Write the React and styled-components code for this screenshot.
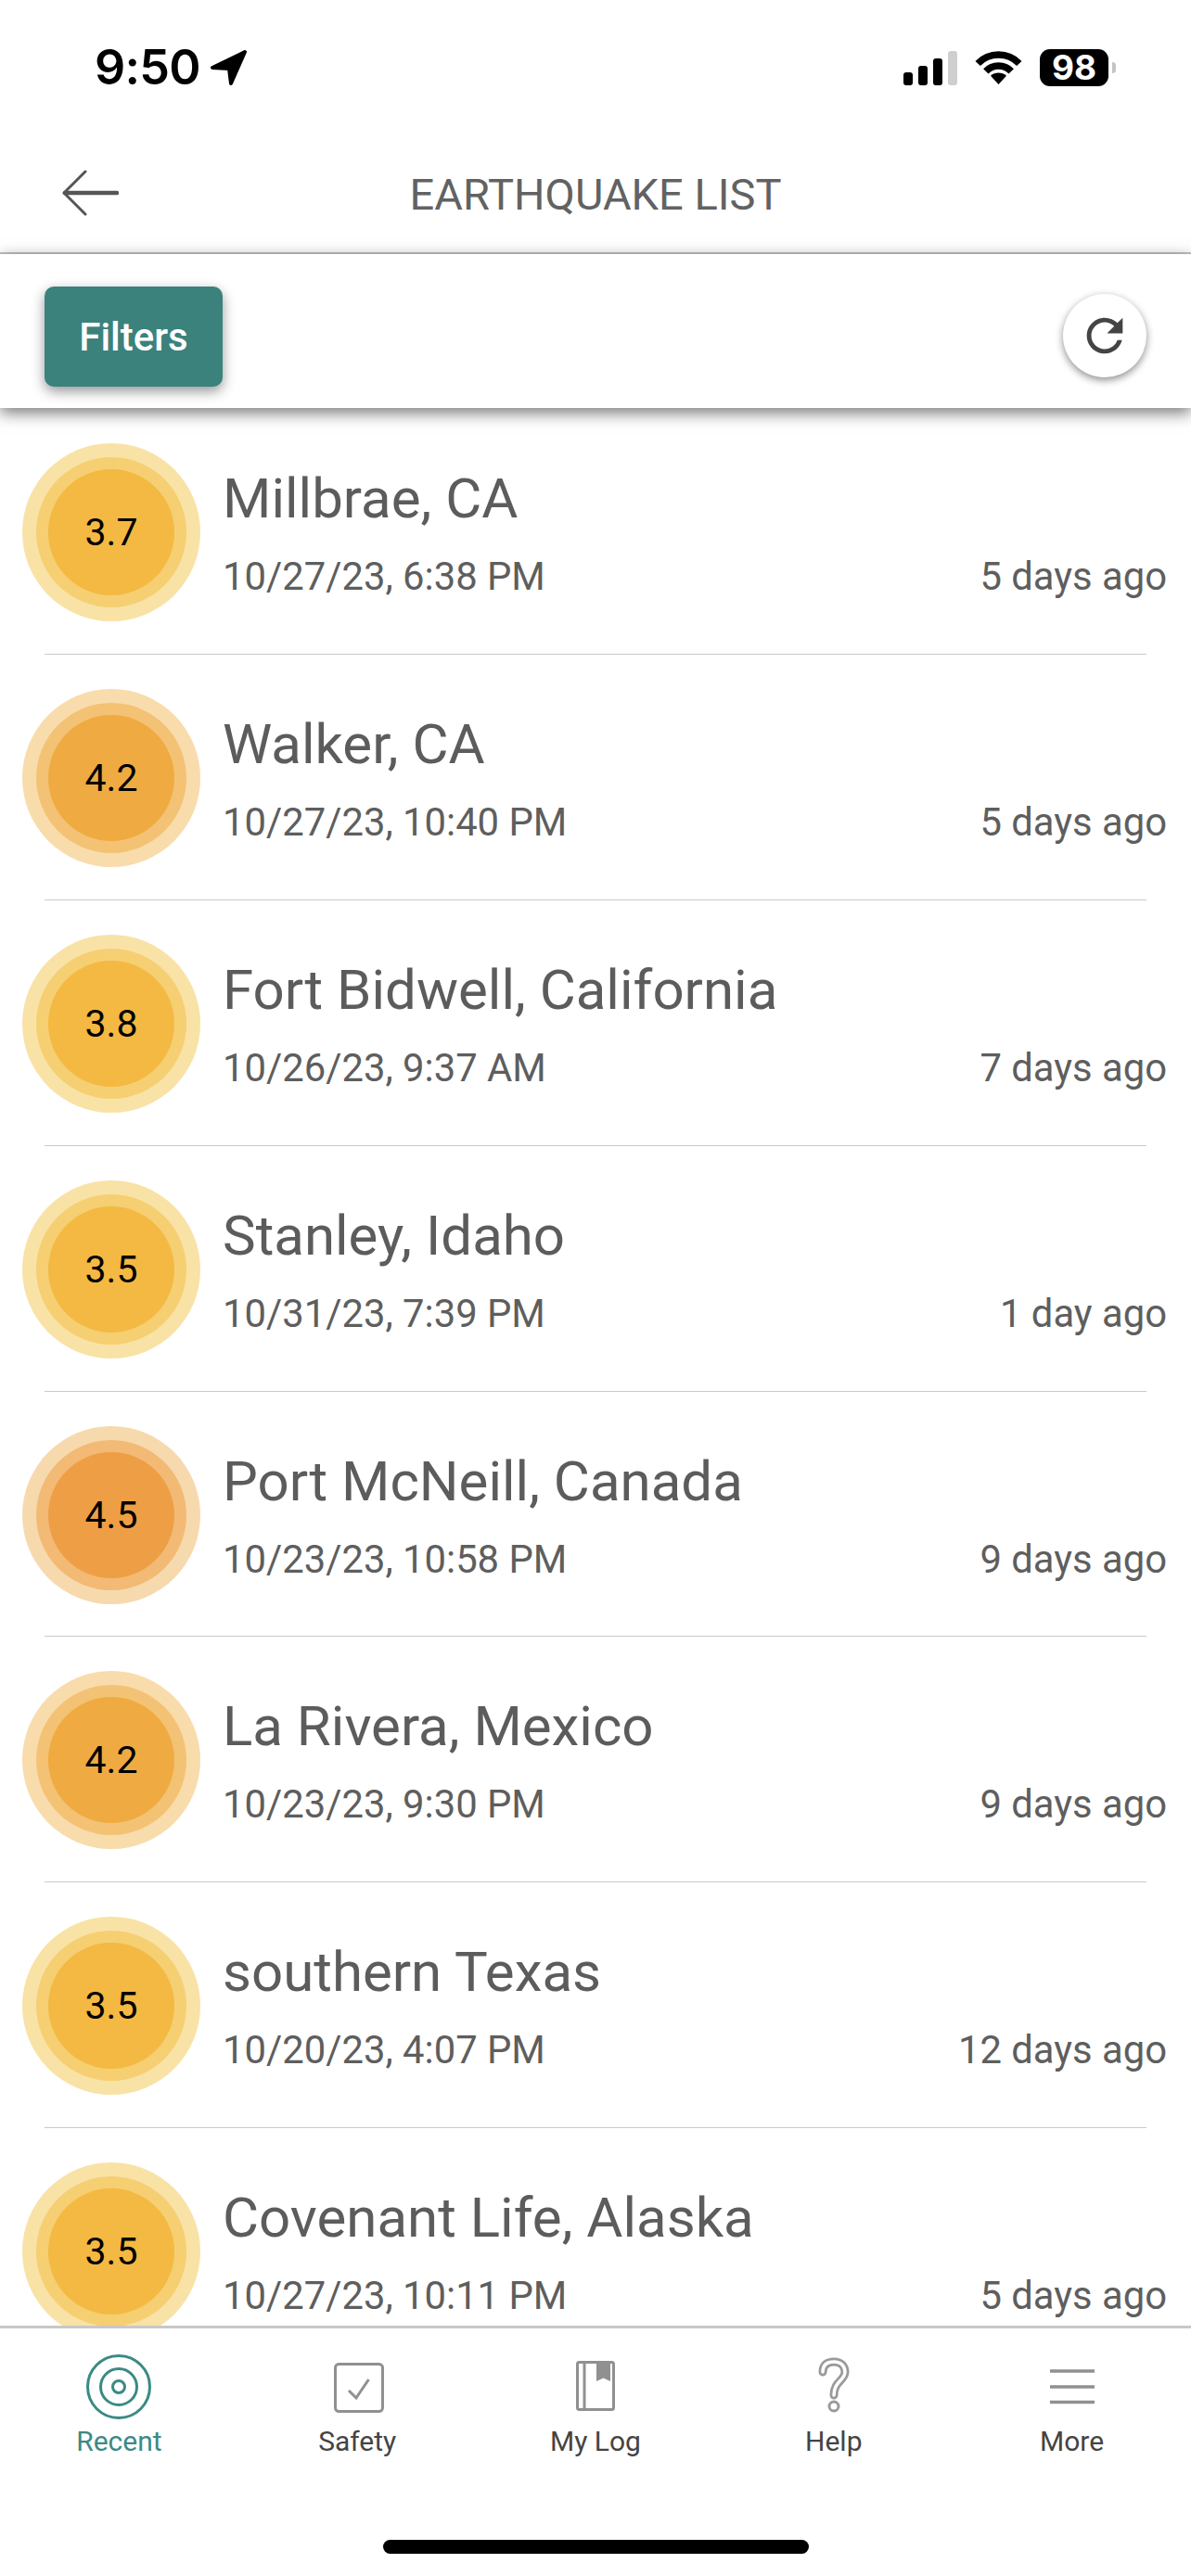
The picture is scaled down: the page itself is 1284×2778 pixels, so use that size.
import React from 'react';
import styled, { createGlobalStyle } from 'styled-components';

const quakes = [
  { mag: '3.7', level: 'low', place: 'Millbrae, CA', date: '10/27/23, 6:38 PM', ago: '5 days ago' },
  { mag: '4.2', level: 'mid', place: 'Walker, CA', date: '10/27/23, 10:40 PM', ago: '5 days ago' },
  { mag: '3.8', level: 'low', place: 'Fort Bidwell, California', date: '10/26/23, 9:37 AM', ago: '7 days ago' },
  { mag: '3.5', level: 'low', place: 'Stanley, Idaho', date: '10/31/23, 7:39 PM', ago: '1 day ago' },
  { mag: '4.5', level: 'high', place: 'Port McNeill, Canada', date: '10/23/23, 10:58 PM', ago: '9 days ago' },
  { mag: '4.2', level: 'mid', place: 'La Rivera, Mexico', date: '10/23/23, 9:30 PM', ago: '9 days ago' },
  { mag: '3.5', level: 'low', place: 'southern Texas', date: '10/20/23, 4:07 PM', ago: '12 days ago' },
  { mag: '3.5', level: 'low', place: 'Covenant Life, Alaska', date: '10/27/23, 10:11 PM', ago: '5 days ago' },
];

const palette = {
  low: { inner: '#f4b942', mid: '#f5cf72', outer: '#f9e2a6', edge: '#f8d98e' },
  mid: { inner: '#efab41', mid: '#f3c274', outer: '#f8dcac', edge: '#f6d298' },
  high: { inner: '#ee9f45', mid: '#f2ba74', outer: '#f7d9ae', edge: '#f5cf9a' },
};

const GlobalStyle = createGlobalStyle`
  html, body {
    margin: 0;
    padding: 0;
    background: #fff;
  }
  * {
    box-sizing: border-box;
  }
`;

const Page = styled.div`
  width: 1284px;
  height: 2778px;
  display: flex;
  flex-direction: column;
  background: #fff;
  font-family: Roboto, 'Liberation Sans', sans-serif;
  overflow: hidden;
`;

const StatusBar = styled.div`
  height: 98px;
  padding: 46px 89px 0 102px;
  display: flex;
  align-items: flex-start;
  color: #000;
`;

const Clock = styled.div`
  display: flex;
  align-items: center;
  gap: 10px;
  font-family: Inter, 'Liberation Sans', sans-serif;
  font-size: 52px;
  font-weight: 600;
  line-height: 54px;
  letter-spacing: -0.8px;
`;

const StatusIcons = styled.div`
  margin-left: auto;
  display: flex;
  align-items: center;
  height: 54px;
`;

const Signal = styled.div`
  display: flex;
  align-items: flex-end;
  gap: 6px;
  height: 38px;
  margin-right: 19px;
`;

const SignalBar = styled.span`
  width: 10px;
  height: ${props => props.$h}px;
  border-radius: 3px;
  background: ${props => (props.$off ? '#cfcfcf' : '#000')};
`;

const Battery = styled.div`
  width: 74px;
  height: 40px;
  margin-left: 19px;
  border-radius: 11px;
  background: #000;
  color: #fff;
  font-family: Inter, 'Liberation Sans', sans-serif;
  font-size: 37px;
  font-weight: 700;
  line-height: 40px;
  text-align: center;
  position: relative;
  &::after {
    content: '';
    position: absolute;
    left: 78px;
    top: 14px;
    width: 4px;
    height: 12px;
    border-radius: 0 6px 6px 0;
    background: #c4c4c4;
  }
`;

const Header = styled.header`
  height: 176px;
  padding-left: 66px;
  border-bottom: 2px solid #c4c4c4;
  display: flex;
  align-items: center;
  position: relative;
`;

const Title = styled.h1`
  position: absolute;
  left: 0;
  right: 0;
  top: 87px;
  margin: 0;
  text-align: center;
  font-size: 47px;
  font-weight: 400;
  line-height: 50px;
  color: #626262;
`;

const BackIcon = styled.svg`
  width: 62px;
  height: 50px;
  margin-top: 46px;
`;

const FilterBar = styled.div`
  height: 166px;
  padding: 35px 48px 0;
  display: flex;
  justify-content: space-between;
  align-items: flex-start;
  background: #fff;
  box-shadow: 0 5px 16px rgba(0, 0, 0, 0.55);
  position: relative;
  z-index: 2;
`;

const FilterButton = styled.button`
  width: 192px;
  height: 108px;
  border: 0;
  border-radius: 10px;
  background: #3b827d;
  color: #fff;
  font-family: inherit;
  font-size: 42px;
  font-weight: 500;
  box-shadow: 0 5px 14px rgba(0, 0, 0, 0.42);
`;

const RefreshButton = styled.button`
  width: 90px;
  height: 90px;
  margin-top: 8px;
  padding: 0;
  border: 0;
  border-radius: 50%;
  background: #fff;
  display: flex;
  align-items: center;
  justify-content: center;
  box-shadow: 0 3px 9px rgba(0, 0, 0, 0.45);
`;

const List = styled.main`
  flex: 1;
  min-height: 0;
  padding-top: 1px;
  overflow: hidden;
`;

const Row = styled.div`
  height: 263.900px;
  padding: 37px 26px 0 24px;
  display: flex;
  gap: 24px;
`;

const Separator = styled.div`
  height: 1px;
  margin: 0 48px;
  background: #c9c9c9;
`;

const Ring = styled.div`
  flex: none;
  width: 192px;
  height: 192px;
  border-radius: 50%;
  background: radial-gradient(circle, ${props => palette[props.$level].outer} 80%, ${props => palette[props.$level].edge} 100%);
  display: flex;
  align-items: center;
  justify-content: center;
`;

const MidRing = styled.div`
  width: 162px;
  height: 162px;
  border-radius: 50%;
  background: ${props => palette[props.$level].mid};
  display: flex;
  align-items: center;
  justify-content: center;
`;

const Core = styled.div`
  width: 136px;
  height: 136px;
  border-radius: 50%;
  background: ${props => palette[props.$level].inner};
  color: #000;
  font-size: 41px;
  display: flex;
  align-items: center;
  justify-content: center;
`;

const Info = styled.div`
  flex: 1;
  min-width: 0;
`;

const Place = styled.div`
  margin-top: 27px;
  font-size: 60px;
  line-height: 66px;
  color: #5c5c5c;
`;

const Meta = styled.div`
  margin-top: 26px;
  display: flex;
  justify-content: space-between;
  font-size: 41.800px;
  line-height: 50px;
  color: #5e5e5e;
`;

const TabBar = styled.nav`
  flex: none;
  height: 270px;
  border-top: 3px solid #c8c8c8;
  background: #fff;
  display: flex;
  position: relative;
  z-index: 1;
`;

const Tab = styled.div`
  flex: 1;
  display: flex;
  flex-direction: column;
  align-items: center;
  padding-top: 27px;
  font-size: 30px;
  line-height: 36px;
  color: ${props => (props.$active ? '#3b8a84' : '#444')};
`;

const TabIcon = styled.svg`
  display: block;
  width: 72px;
  height: 72px;
  margin-bottom: 5px;
`;

const HomeIndicator = styled.div`
  position: absolute;
  left: 413px;
  top: 228px;
  width: 459px;
  height: 15px;
  border-radius: 8px;
  background: #000;
`;

const LocationIcon = () => (
  <svg width="42" height="40" viewBox="0 0 42 40">
    <path d="M38 3 L3 20 L21 21 L23 37 Z" fill="#000" stroke="#000" strokeWidth="4" strokeLinejoin="round" />
  </svg>
);

const WifiIcon = () => (
  <svg width="51" height="36" viewBox="0 0 51 36">
    <path d="M3.2 13.500 A31 31 0 0 1 47.800 13.500" fill="none" stroke="#000" strokeWidth="7.500" />
    <path d="M11.800 21.800 A19 19 0 0 1 39.200 21.800" fill="none" stroke="#000" strokeWidth="7.500" />
    <path d="M25.500 36 L17 26.800 A12.500 12.500 0 0 1 34 26.800 Z" fill="#000" />
  </svg>
);

const RadarIcon = () => (
  <TabIcon viewBox="0 0 72 72" fill="none" stroke="#3b8a84" strokeWidth="3">
    <circle cx="36" cy="36" r="33.500" />
    <circle cx="36" cy="36" r="19.500" />
    <circle cx="36" cy="36" r="6.500" />
  </TabIcon>
);

const SafetyIcon = () => (
  <TabIcon viewBox="0 0 72 72" fill="none" stroke="#909090">
    <rect x="12.500" y="11.500" width="51" height="51" rx="4" strokeWidth="3" />
    <path d="M27 40 L35 48 L48.500 28" strokeWidth="3" />
  </TabIcon>
);

const BookIcon = () => (
  <TabIcon viewBox="0 0 72 72" fill="none" stroke="#909090" strokeWidth="3">
    <rect x="16.500" y="9.500" width="39" height="51" rx="2" />
    <path d="M24 9 V60" />
    <path d="M37 9 H52 V30 L44.500 26.500 L37 30 Z" fill="#909090" stroke="none" />
  </TabIcon>
);

const HelpIcon = () => (
  <TabIcon viewBox="0 0 72 72" fill="none">
    <path d="M24 20 C24 12 29 9 36 9 C44 9 48 14 48 20 C48 29 36 30 36 45" stroke="#9a9a9a" strokeWidth="9" strokeLinecap="round" />
    <path d="M24 20 C24 12 29 9 36 9 C44 9 48 14 48 20 C48 29 36 30 36 45" stroke="#fff" strokeWidth="3.500" strokeLinecap="round" />
    <circle cx="36" cy="57" r="5" stroke="#9a9a9a" strokeWidth="3" />
  </TabIcon>
);

const MenuIcon = () => (
  <TabIcon viewBox="0 0 72 72" fill="none" stroke="#909090" strokeWidth="3.500">
    <path d="M12 19 H60 M12 36 H60 M12 52.500 H60" />
  </TabIcon>
);

const tabs = [
  { label: 'Recent', Icon: RadarIcon, active: true },
  { label: 'Safety', Icon: SafetyIcon },
  { label: 'My Log', Icon: BookIcon },
  { label: 'Help', Icon: HelpIcon },
  { label: 'More', Icon: MenuIcon },
];

const App = () => (
  <Page>
    <GlobalStyle />
    <StatusBar>
      <Clock>
        9:50
        <LocationIcon />
      </Clock>
      <StatusIcons>
        <Signal>
          <SignalBar $h={14} />
          <SignalBar $h={21} />
          <SignalBar $h={29} />
          <SignalBar $h={37} $off />
        </Signal>
        <WifiIcon />
        <Battery>98</Battery>
      </StatusIcons>
    </StatusBar>

    <Header>
      <BackIcon viewBox="0 0 62 50" fill="none" stroke="#555">
        <path d="M26 2 L3 25 L26 48" strokeWidth="3" strokeLinecap="round" strokeLinejoin="round" />
        <path d="M4 25 H60" strokeWidth="4.500" strokeLinecap="round" />
      </BackIcon>
      <Title>EARTHQUAKE LIST</Title>
    </Header>

    <FilterBar>
      <FilterButton>Filters</FilterButton>
      <RefreshButton>
        <svg width="58" height="58" viewBox="0 0 24 24" fill="#444">
          <path d="M17.65 6.35C16.2 4.9 14.21 4 12 4c-4.42 0-7.99 3.58-7.99 8s3.57 8 7.99 8c3.73 0 6.84-2.55 7.73-6h-2.08c-.82 2.33-3.04 4-5.65 4-3.31 0-6-2.69-6-6s2.69-6 6-6c1.66 0 3.14.69 4.22 1.78L13 11h7V4l-2.35 2.35z" />
        </svg>
      </RefreshButton>
    </FilterBar>

    <List>
      {quakes.map((quake, i) => (
        <React.Fragment key={i}>
          <Row>
            <Ring $level={quake.level}>
              <MidRing $level={quake.level}>
                <Core $level={quake.level}>{quake.mag}</Core>
              </MidRing>
            </Ring>
            <Info>
              <Place>{quake.place}</Place>
              <Meta>
                <span>{quake.date}</span>
                <span>{quake.ago}</span>
              </Meta>
            </Info>
          </Row>
          <Separator />
        </React.Fragment>
      ))}
    </List>

    <TabBar>
      {tabs.map(({ label, Icon, active }) => (
        <Tab key={label} $active={active}>
          <Icon />
          {label}
        </Tab>
      ))}
      <HomeIndicator />
    </TabBar>
  </Page>
);

export default App;
